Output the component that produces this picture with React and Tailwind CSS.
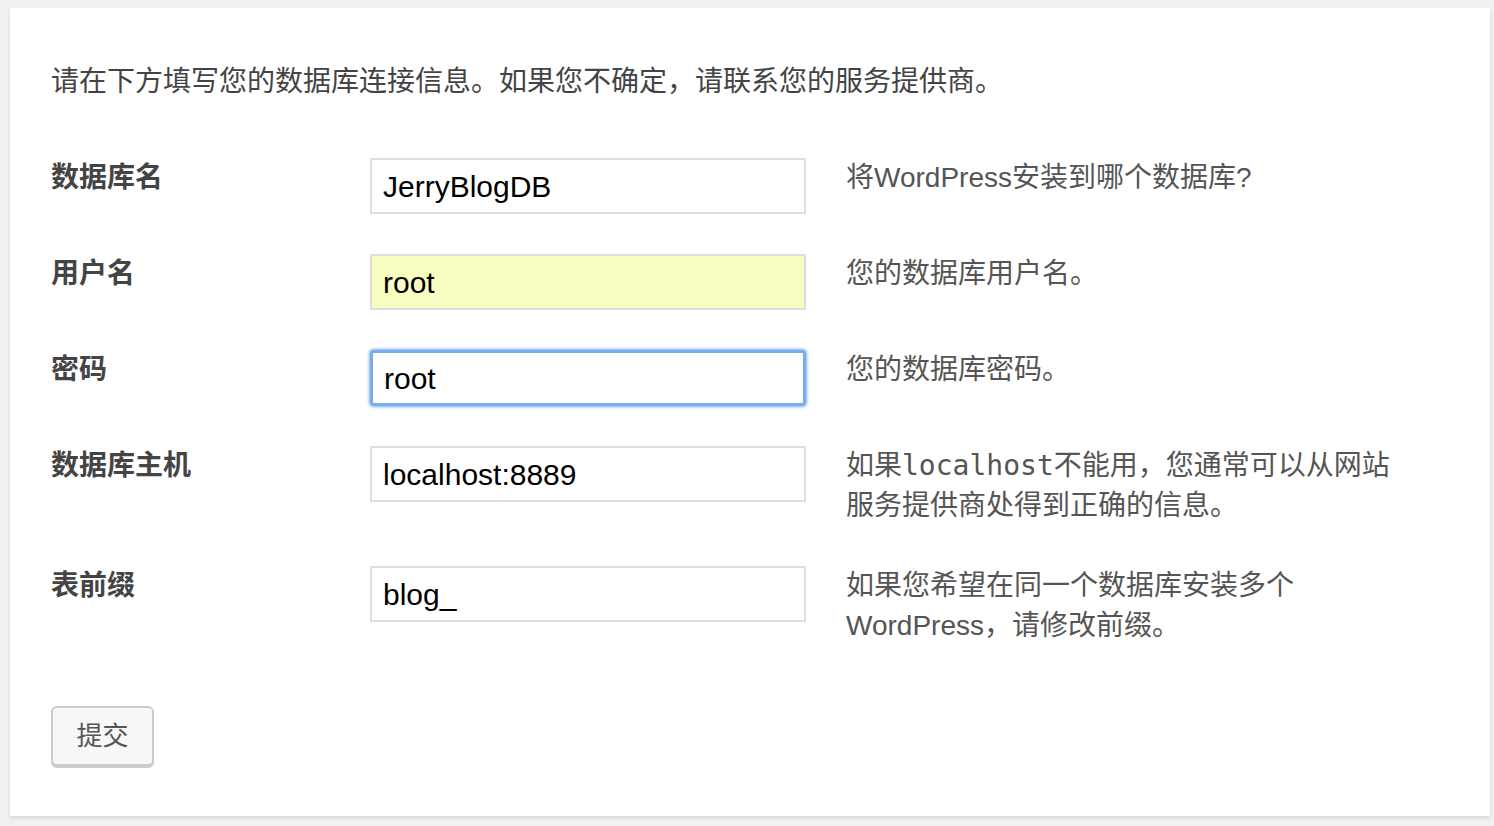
const rows = [
  { label: '数据库名', value: 'JerryBlogDB', desc: ['将WordPress安装到哪个数据库?'] },
  { label: '用户名', value: 'root', desc: ['您的数据库用户名。'], autofill: true },
  { label: '密码', value: 'root', desc: ['您的数据库密码。'], focus: true },
  {
    label: '数据库主机',
    value: 'localhost:8889',
    desc: [
      <>
        如果<code className="font-['DejaVu_Sans_Mono',monospace] text-[28px]">localhost</code>不能用，您通常可以从网站
      </>,
      '服务提供商处得到正确的信息。',
    ],
  },
  { label: '表前缀', value: 'blog_', desc: ['如果您希望在同一个数据库安装多个', 'WordPress，请修改前缀。'] },
];

export default function App() {
  return (
    <div className="min-h-screen bg-[#f1f1f1] pt-[8px] pl-[10px] pr-[4px] pb-[10px] font-['Liberation_Sans','Noto_Sans_CJK_SC',sans-serif] text-[#444]">
      <div className="bg-white shadow-[0_2px_4px_rgba(0,0,0,0.12)] h-[808px] pt-[54px] pl-[41px]">
        <p className="text-[28px] leading-[40px]">
          请在下方填写您的数据库连接信息。如果您不确定，请联系您的服务提供商。
        </p>

        <div className="mt-[36px]">
          {rows.map((r) => (
            <div key={r.label} className="flex py-[20px]">
              <div className="w-[319px] shrink-0 font-bold text-[28px] leading-[40px]">{r.label}</div>
              <div className="w-[436px] shrink-0">
                <div
                  className={
                    'h-[56px] flex items-center px-[11px] text-[30px] text-black ' +
                    (r.focus
                      ? 'border-[3px] border-[#7aaaf0] shadow-[0_0_3px_1px_rgba(91,157,233,0.8)] rounded-[4px] bg-white'
                      : r.autofill
                        ? 'border-2 border-[#dddddd] bg-[#fafdc2]'
                        : 'border-2 border-[#dddddd] bg-white')
                  }
                >
                  {r.value}
                </div>
              </div>
              <div className="ml-[40px] text-[28px] leading-[40px] whitespace-nowrap text-[#555]">
                {r.desc.map((d, i) => (
                  <div key={i}>{d}</div>
                ))}
              </div>
            </div>
          ))}
        </div>

        <button className="mt-[40px] w-[103px] h-[60px] bg-[#f7f7f7] border-2 border-[#cccccc] rounded-[6px] shadow-[0_2px_0_#cccccc] text-[26px] text-[#555]">
          提交
        </button>
      </div>
    </div>
  );
}
